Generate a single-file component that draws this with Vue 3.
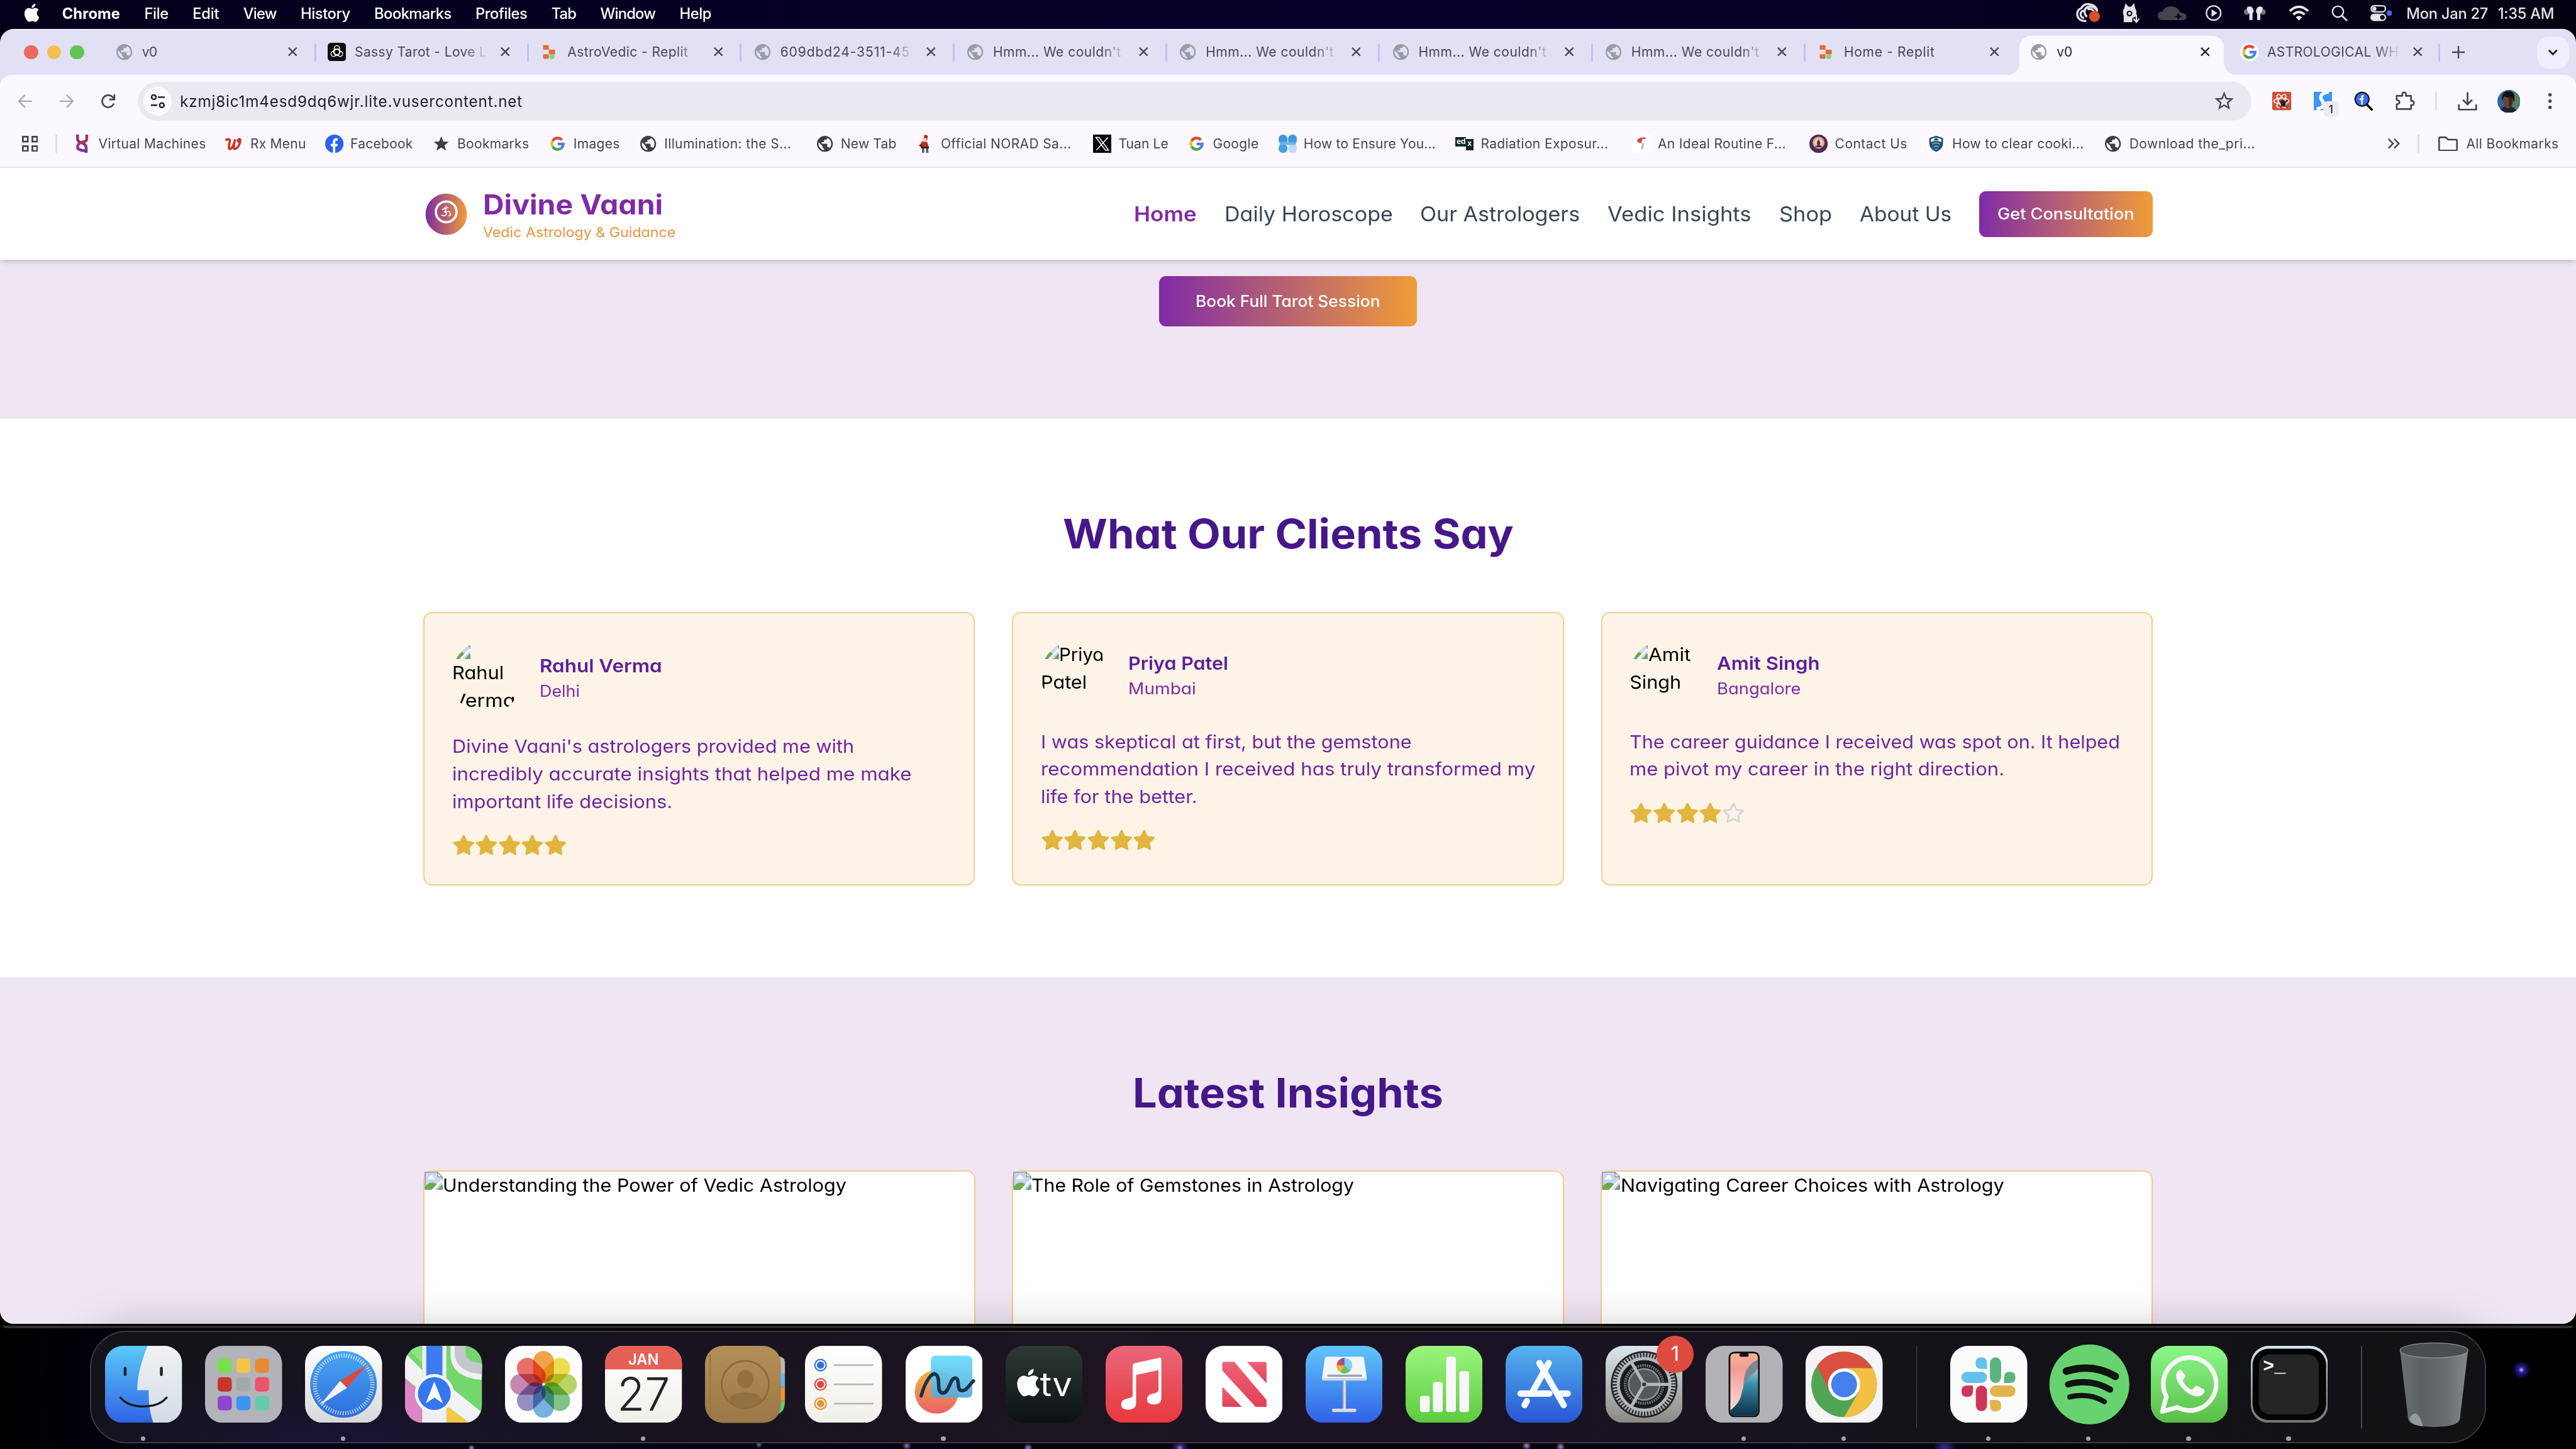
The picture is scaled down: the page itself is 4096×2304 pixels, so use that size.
<script setup>
const DESIGN_WIDTH = 4480

// Sizes a label to the given width: by tracking, or by widening the glyphs with the .wide modifier.
const vFit = {
  mounted(el, { value, modifiers }) {
    const unit = el.closest('.screen').getBoundingClientRect().width / DESIGN_WIDTH
    const natural = el.getBoundingClientRect().width / unit
    if (modifiers.wide) {
      el.style.width = `${value}px`
      el.style.transform = `scaleX(${value / natural})`
    } else {
      el.style.letterSpacing = `${(value - natural) / el.textContent.length}px`
    }
  },
}

const menus = [
  { label: 'Chrome', w: 101, bold: true },
  { label: 'File', w: 42 },
  { label: 'Edit', w: 46 },
  { label: 'View', w: 58 },
  { label: 'History', w: 86 },
  { label: 'Bookmarks', w: 134 },
  { label: 'Profiles', w: 90 },
  { label: 'Tab', w: 43 },
  { label: 'Window', w: 96 },
  { label: 'Help', w: 55 },
]

const tabs = [
  { title: 'v0', icon: 'globe', w: 26 },
  { title: 'Sassy Tarot - Love L', icon: 'gpt', w: 230 },
  { title: 'AstroVedic - Replit', icon: 'replit', w: 210 },
  { title: '609dbd24-3511-45', icon: 'globe', w: 226 },
  { title: "Hmm... We couldn't", icon: 'globe', w: 223 },
  { title: "Hmm... We couldn't", icon: 'globe', w: 223 },
  { title: "Hmm... We couldn't", icon: 'globe', w: 223 },
  { title: "Hmm... We couldn't", icon: 'globe', w: 223 },
  { title: 'Home - Replit', icon: 'replit', w: 158 },
  { title: 'v0', icon: 'globe', w: 27, active: true },
  { title: 'ASTROLOGICAL WH', icon: 'google', w: 229 },
]

const bookmarks = [
  { label: 'Virtual Machines', icon: 'vm', cell: 264, w: 187 },
  { label: 'Rx Menu', icon: 'rx', cell: 174, w: 97 },
  { label: 'Facebook', icon: 'facebook', cell: 186, w: 109 },
  { label: 'Bookmarks', icon: 'solidstar', cell: 202, w: 125 },
  { label: 'Images', icon: 'google', cell: 158, w: 81 },
  { label: 'Illumination: the S...', icon: 'globe', cell: 307, w: 221 },
  { label: 'New Tab', icon: 'globe', cell: 174, w: 97 },
  { label: 'Official NORAD Sa...', icon: 'santa', cell: 309, w: 227 },
  { label: 'Tuan Le', icon: 'x', cell: 164, w: 87 },
  { label: 'Google', icon: 'google', cell: 158, w: 80 },
  { label: 'How to Ensure You...', icon: 'petals', cell: 308, w: 230 },
  { label: 'Radiation Exposur...', icon: 'edx', cell: 308, w: 222 },
  { label: 'An Ideal Routine F...', icon: 'ideal', cell: 308, w: 223 },
  { label: 'Contact Us', icon: 'contact', cell: 204, w: 126 },
  { label: 'How to clear cooki...', icon: 'shield', cell: 308, w: 229 },
  { label: 'Download the_pri...', icon: 'globe', cell: 262, w: 219 },
]

const links = [
  { label: 'Home', w: 109, current: true },
  { label: 'Daily Horoscope', w: 293 },
  { label: 'Our Astrologers', w: 278 },
  { label: 'Vedic Insights', w: 250 },
  { label: 'Shop', w: 92 },
  { label: 'About Us', w: 160 },
]

const clients = [
  {
    name: 'Rahul Verma', nameW: 213, city: 'Delhi', cityW: 70, stars: 5, tall: true,
    alt: [['Rahul', 90], ['Verma', 110]],
    lines: [
      ["Divine Vaani's astrologers provided me with", 699],
      ['incredibly accurate insights that helped me make', 799],
      ['important life decisions.', 383],
    ],
  },
  {
    name: 'Priya Patel', nameW: 174, city: 'Mumbai', cityW: 118, stars: 5,
    alt: [['Priya', 78], ['Patel', 80]],
    lines: [
      ['I was skeptical at first, but the gemstone', 645],
      ['recommendation I received has truly transformed my', 860],
      ['life for the better.', 272],
    ],
  },
  {
    name: 'Amit Singh', nameW: 179, city: 'Bangalore', cityW: 146, stars: 4,
    alt: [['Amit', 74], ['Singh', 90]],
    lines: [
      ['The career guidance I received was spot on. It helped', 853],
      ['me pivot my career in the right direction.', 652],
    ],
  },
]

const insights = [
  { title: 'Understanding the Power of Vedic Astrology', w: 702 },
  { title: 'The Role of Gemstones in Astrology', w: 561 },
  { title: 'Navigating Career Choices with Astrology', w: 667 },
]

const petals = ['#f3982f', '#efdc36', '#b5d251', '#6fbe7a', '#64a9dd', '#8583bd', '#c279ad', '#ea5c55']
const pads = ['#79e04d', '#f3c447', '#e88a35', '#c7362b', '#a3a9ab', '#ec5467', '#8f45cf', '#3c95f2', '#66c9ab']
</script>

<template>
  <div class="screen">
    <svg class="defs" width="0" height="0" aria-hidden="true">
      <defs>
        <linearGradient id="g-om"><stop offset="0" stop-color="#7d2ba3" /><stop offset="1" stop-color="#f09c3b" /></linearGradient>
        <linearGradient id="g-finder" x2="0" y2="1"><stop offset="0" stop-color="#5cc9f8" /><stop offset="1" stop-color="#2f63e6" /></linearGradient>
        <linearGradient id="g-face" x2="0" y2="1"><stop offset="0" stop-color="#f1f1f3" /><stop offset="1" stop-color="#d3dce6" /></linearGradient>
        <linearGradient id="g-white" x2="0" y2="1"><stop offset="0" stop-color="#ffffff" /><stop offset="1" stop-color="#d9d9da" /></linearGradient>
        <linearGradient id="g-paper" x2="0" y2="1"><stop offset="0" stop-color="#ffffff" /><stop offset="1" stop-color="#f0efea" /></linearGradient>
        <linearGradient id="g-safari" x2="0" y2="1"><stop offset="0" stop-color="#4ba7f0" /><stop offset="1" stop-color="#2c6cdf" /></linearGradient>
        <linearGradient id="g-wood" x2="0" y2="1"><stop offset="0" stop-color="#b39058" /><stop offset="1" stop-color="#9c7747" /></linearGradient>
        <linearGradient id="g-sun" x2="0" y2="1"><stop offset="0" stop-color="#f5b63c" /><stop offset="1" stop-color="#ea6069" /></linearGradient>
        <linearGradient id="g-aqua" x2="0" y2="1"><stop offset="0" stop-color="#67dcfa" /><stop offset="1" stop-color="#58a9dc" /></linearGradient>
        <linearGradient id="g-tv" x2="0" y2="1"><stop offset="0" stop-color="#2e3a36" /><stop offset="1" stop-color="#0b1113" /></linearGradient>
        <linearGradient id="g-music" x2="0" y2="1"><stop offset="0" stop-color="#ea667a" /><stop offset="1" stop-color="#e7383d" /></linearGradient>
        <linearGradient id="g-news" x2="0" y2="1"><stop offset="0" stop-color="#ec6377" /><stop offset="1" stop-color="#e33f52" /></linearGradient>
        <linearGradient id="g-keynote" x2="0" y2="1"><stop offset="0" stop-color="#60c6fa" /><stop offset="1" stop-color="#2f60e8" /></linearGradient>
        <linearGradient id="g-numbers" x2="0" y2="1"><stop offset="0" stop-color="#9af57e" /><stop offset="1" stop-color="#5dcb3f" /></linearGradient>
        <linearGradient id="g-store" x2="0" y2="1"><stop offset="0" stop-color="#55b3ef" /><stop offset="1" stop-color="#2756d4" /></linearGradient>
        <linearGradient id="g-prefs" x2="0" y2="1"><stop offset="0" stop-color="#dbe6ec" /><stop offset="1" stop-color="#8b8983" /></linearGradient>
        <linearGradient id="g-phone" x2="0" y2="1"><stop offset="0" stop-color="#f6b48c" /><stop offset=".25" stop-color="#f19c98" /><stop offset="1" stop-color="#fbe3df" /></linearGradient>
        <linearGradient id="g-sea" x2="0" y2="1"><stop offset="0" stop-color="#8ccfda" /><stop offset=".3" stop-color="#3b8ea9" /><stop offset="1" stop-color="#0e3048" /></linearGradient>
        <linearGradient id="g-wa" x2="0" y2="1"><stop offset="0" stop-color="#8cf888" /><stop offset="1" stop-color="#5abd49" /></linearGradient>
        <linearGradient id="g-term" x2="0" y2="1"><stop offset="0" stop-color="#d3e6ee" /><stop offset="1" stop-color="#76726f" /></linearGradient>
        <linearGradient id="g-bin"><stop offset="0" stop-color="#6d7073" /><stop offset=".3" stop-color="#5c6063" /><stop offset=".7" stop-color="#6b6e71" /><stop offset="1" stop-color="#85898b" /></linearGradient>
      </defs>

      <symbol id="globe" viewBox="1.500 1.500 21 21">
        <path fill="currentColor" d="M12 2C6.480 2 2 6.480 2 12s4.480 10 10 10 10-4.480 10-10S17.520 2 12 2zm-1 17.930c-3.950-.49-7-3.850-7-7.930 0-.62.080-1.210.210-1.790L9 15v1c0 1.100.9 2 2 2v1.930zm6.900-2.540c-.26-.81-1-1.390-1.900-1.390h-1v-3c0-.55-.45-1-1-1H8v-2h2c.55 0 1-.45 1-1V7h2c1.100 0 2-.9 2-2v-.41c2.930 1.190 5 4.060 5 7.410 0 2.080-.8 3.970-2.100 5.390z" />
      </symbol>
      <symbol id="google" viewBox="0 0 32 32">
        <circle cx="16" cy="16" r="16" fill="#fff" />
        <g fill="none" stroke-width="4.800">
          <path d="M23.500 9.300A10 10 0 0 0 7.300 11.200" stroke="#dd4b39" />
          <path d="M7.300 11.200a10 10 0 0 0 0 9.600" stroke="#f2b92f" />
          <path d="M7.300 20.800a10 10 0 0 0 15.300 2.600" stroke="#4ca357" />
          <path d="M22.600 23.400A10 10 0 0 0 26 16.300H16.200" stroke="#4c80ee" />
        </g>
      </symbol>
      <symbol id="replit" viewBox="0 0 32 32">
        <path fill="#e36d30" d="M5 4h8a2 2 0 0 1 2 2v6H5zM15 12h9a2 2 0 0 1 2 2v6H15zM5 20h10v6a2 2 0 0 1-2 2H7a2 2 0 0 1-2-2z" />
        <circle cx="20.500" cy="24" r="4.500" fill="#83d48b" />
      </symbol>
      <symbol id="gpt" viewBox="0 0 32 32">
        <rect width="32" height="32" rx="6" fill="#0c0c0c" />
        <g fill="none" stroke="#fff" stroke-width="1.500">
          <rect x="11.500" y="5" width="9" height="17" rx="4.500" /><rect x="11.500" y="5" width="9" height="17" rx="4.500" transform="rotate(120 16 16)" /><rect x="11.500" y="5" width="9" height="17" rx="4.500" transform="rotate(240 16 16)" />
        </g>
      </symbol>
      <symbol id="vm" viewBox="0 0 32 32">
        <path d="M8 0v7q0 5 6 7 9 2 9 9v9" fill="none" stroke="#8a327f" stroke-width="5" />
        <path d="M24 0v8q0 4-8 5-8 2-8 9 0 5 11 6" fill="none" stroke="#a13862" stroke-width="5" />
        <path d="M8 22q0 5 11 6h4v4" fill="none" stroke="#7431a4" stroke-width="4" />
      </symbol>
      <symbol id="rx" viewBox="0 0 32 32">
        <path d="M2 9q7-3 6 3-3 13 0 13 5 0 9-15-4 15 0 15 6-1 9-12 1-6-2-5-4 2 0 5" fill="none" stroke="#cf3426" stroke-width="4" stroke-linecap="round" stroke-linejoin="round" />
      </symbol>
      <symbol id="facebook" viewBox="0 0 32 32">
        <circle cx="16" cy="16" r="16" fill="#2b62f0" />
        <path fill="#fff" d="M13.500 32V20.500H9.800V16h3.700v-3.400c0-4.100 2.200-6.200 6-6.200 1.200 0 2.400.2 2.400.2v4h-2c-1.900 0-2.300 1-2.300 2.200V16h4.200l-.8 4.500h-3.400V32z" />
      </symbol>
      <symbol id="solidstar" viewBox="0 0 32 32">
        <path fill="#3e4044" d="M16 3l3.700 8.900 9.300.6-7.200 6 2.400 9.300-8.200-5.200-8.200 5.200 2.400-9.300-7.200-6 9.300-.6z" />
      </symbol>
      <symbol id="santa" viewBox="0 0 32 32">
        <path d="M15 0l6 2-1 8h-6z" fill="#b0231c" /><path d="M12 6h7v7h-7z" fill="#e6cdb8" />
        <path d="M10 12l10 1 3 9-11 2-4-3z" fill="#c42a20" /><path d="M9 21h14v3H9z" fill="#2b1b1a" />
        <path d="M11 24h4v8h-4zM18 24h4v8h-4z" fill="#50605a" /><path d="M5 19l5-3v5z" fill="#222" />
      </symbol>
      <symbol id="x" viewBox="0 0 32 32">
        <rect width="32" height="32" fill="#050505" />
        <path d="M5 5h5.500L27 27h-5.500zM26 5L6 27" fill="none" stroke="#fff" stroke-width="1.700" />
      </symbol>
      <symbol id="petals" viewBox="0 0 32 32">
        <rect width="15.500" height="17" rx="7.500" fill="#4597dc" /><rect x="16.500" width="15.500" height="17" rx="7.500" fill="#4597dc" />
        <rect y="16" width="15.500" height="16" rx="7.500" fill="#4c9fe2" /><rect x="16.500" y="16" width="15.500" height="16" rx="7.500" fill="#bcdcf5" />
        <rect x="2" y="13" width="28" height="5" fill="#6fb2e8" />
      </symbol>
      <symbol id="ideal" viewBox="0 0 32 32">
        <rect width="32" height="32" fill="#fff" />
        <path d="M8 9q4-5 14-4l2 2-7 1-2 7-7-2z" fill="#c0523f" /><path d="M16 13l4 3-2 10-3-1z" fill="#c5bcb8" />
      </symbol>
      <symbol id="contact" viewBox="0 0 32 32">
        <circle cx="16" cy="16" r="16" fill="#4d2a56" /><circle cx="16" cy="14" r="10.500" fill="#d9a093" /><circle cx="16" cy="14" r="7.500" fill="#f0cda8" />
        <path d="M16 8l3 6-1 4 5 4H9l5-4-1-4z" fill="#4d2a56" />
      </symbol>
      <symbol id="shield" viewBox="0 0 32 32">
        <rect width="32" height="32" rx="4" fill="#fff" />
        <path d="M16 2l12 4v9q0 10-12 15Q4 25 4 15V6z" fill="#294a79" />
        <path d="M7 8l9-3 9 3v5q-9-4-18 0z" fill="#fff" /><path d="M16 5l5 5H11z" fill="#294a79" />
        <path d="M9 17q7-5 14 0M11 22q5-4 10 0M14 26q2-2 4 0" fill="none" stroke="#5cb8a4" stroke-width="2" />
      </symbol>
      <symbol id="cross" viewBox="0 0 16 16">
        <path d="M1 1l14 14M15 1L1 15" stroke="currentColor" stroke-width="2.600" fill="none" />
      </symbol>
      <symbol id="broken" viewBox="0 0 32 32">
        <path d="M1 1h22l8 8v22H1z" fill="#c6d7f4" />
        <path d="M5 13q0-3 3-3 1-4 4-4t4 4q2 0 2 3z" fill="#fff" />
        <path d="M1 31v-5q7-7 12-7 6 0 10 6l-5 6z" fill="#6dab48" />
        <path d="M31 12v5L17 32h-5z" fill="#fff" /><path d="M31 21v10h-8z" fill="#6dab48" />
        <path d="M23 1v8h8z" fill="#fff" />
        <path d="M1 31V1h22l8 8v5M23 1v8h8M1 31h12M22 31h9v-8" fill="none" stroke="#8c8f94" stroke-width="1.500" />
      </symbol>
      <symbol id="star" viewBox="0 0 24 24">
        <path stroke="currentColor" stroke-width="2" stroke-linejoin="round" d="M12 2l3.090 6.260L22 9.270l-5 4.870 1.180 6.880L12 17.770l-6.180 3.250L7 14.140 2 9.270l6.910-1.010z" />
      </symbol>
      <symbol id="apple" viewBox="0 0 26 32">
        <path fill="currentColor" d="M21.600 17c0-3.200 2.600-4.700 2.700-4.800-1.500-2.200-3.800-2.500-4.600-2.500-2-.2-3.800 1.200-4.800 1.200s-2.500-1.100-4.100-1.100c-2.100 0-4.100 1.200-5.200 3.100-2.200 3.900-.6 9.600 1.600 12.700 1.100 1.500 2.300 3.300 4 3.200 1.600-.1 2.200-1 4.100-1s2.500 1 4.200 1 2.800-1.500 3.900-3.100c1.200-1.800 1.700-3.500 1.700-3.600 0 0-3.400-1.300-3.500-5.100zM18.400 7.700c.9-1.100 1.500-2.600 1.300-4.100-1.300.1-2.800.9-3.800 1.900-.8 1-1.600 2.500-1.400 4 1.500.1 3-.7 3.900-1.800z" />
      </symbol>
    </svg>

    <header class="menubar">
      <svg class="apple" viewBox="3 3 22 27"><use href="#apple" width="26" height="32" /></svg>
      <nav class="menus">
        <span v-for="m in menus" :key="m.label" v-fit="m.w" class="t" :class="{ bold: m.bold }">{{ m.label }}</span>
      </nav>
      <div class="status">
        <svg width="42" height="34" viewBox="0 0 42 34">
          <path d="M18 31Q4 32 2 20 2 11 9 9 14 0 24 2q12 2 13 12-4-8-12-8-9 0-10 8-1 5 4 10M14 26q-6-1-6-7 0-5 6-6M20 11q8-3 12 5" fill="none" stroke="#e4e3e8" stroke-width="3.600" />
          <circle cx="32" cy="23" r="9.500" fill="#dd4d27" />
        </svg>
        <svg width="30" height="34" viewBox="0 0 30 34">
          <path d="M2 33V22Q-1 14 3 9L5 0l5 6h5l5-6 2 9q4 6 1 12v2l-6 3v7z" fill="#e4e3e8" />
          <circle cx="12" cy="18" r="5" fill="#05011a" /><circle cx="12" cy="18" r="2.600" fill="#e4e3e8" />
          <path d="M24 20v12M19 27l5 6 5-6" stroke="#e4e3e8" stroke-width="2.500" fill="none" />
        </svg>
        <svg width="50" height="24" viewBox="0 0 50 24">
          <path d="M9 24Q0 23 0 16q1-7 8-7 5-9 16-9 12 1 15 11 11 1 11 7 0 6-7 6z" fill="#45434f" />
          <path d="M36 11q1 6 7 7-6 1-7 6-1-5-7-6 6-1 7-7z" fill="#0b0718" />
        </svg>
        <svg width="30" height="30" viewBox="0 0 30 30">
          <circle cx="15" cy="15" r="12.500" fill="none" stroke="#e4e3e8" stroke-width="2.500" /><path d="M11.500 8.500v13l10-6.500z" fill="#e4e3e8" />
        </svg>
        <svg width="40" height="28" viewBox="0 0 40 28">
          <circle cx="6" cy="12" r="5" fill="#77757f" /><circle cx="34" cy="12" r="5" fill="#77757f" />
          <path d="M6 5Q9 1 14 3q4 3 4 9l-2 3v11h-5.500V15q-4-3-4.500-10zM34 5q-3-4-8-2-4 3-4 9l2 3v11h5.500V15q4-3 4.500-10z" fill="#e4e3e8" />
        </svg>
        <svg width="36" height="26" viewBox="0 0 36 26">
          <path d="M2 9.500q16-15 32 0M8 15.500q10-9 20 0" fill="none" stroke="#e4e3e8" stroke-width="4.200" /><path d="M12.500 20q5.500-4.500 11 0L18 26z" fill="#e4e3e8" />
        </svg>
        <svg width="28" height="28" viewBox="0 0 28 28">
          <circle cx="11.500" cy="11.500" r="9.500" fill="none" stroke="#e4e3e8" stroke-width="2.600" /><path d="M18.500 18.500l8 8" stroke="#e4e3e8" stroke-width="3" stroke-linecap="round" />
        </svg>
        <svg width="38" height="28" viewBox="0 0 38 28">
          <rect x="1.300" y="1.300" width="25" height="10.500" rx="5.200" fill="none" stroke="#e4e3e8" stroke-width="2.500" /><circle cx="7" cy="6.500" r="3.600" fill="#e4e3e8" />
          <rect y="15" width="27.500" height="13" rx="6.500" fill="#e4e3e8" /><circle cx="21" cy="21.500" r="4" fill="#0a0618" />
          <circle cx="33" cy="14" r="5" fill="#5b5ce0" />
        </svg>
        <div class="clock"><span v-fit="142" class="t">Mon Jan 27</span><span v-fit="98" class="t">1:35 AM</span></div>
      </div>
    </header>

    <main class="window">
      <div class="tabstrip">
        <div class="lights"><i class="red" /><i class="amber" /><i class="green" /></div>
        <div class="tabs">
          <div v-for="(tab, i) in tabs" :key="i" class="tab" :class="{ active: tab.active, last: i === tabs.length - 1, quiet: i === 8 }">
            <svg class="favicon" :class="tab.icon"><use :href="`#${tab.icon}`" /></svg>
            <div class="title"><span v-fit="tab.w" class="t">{{ tab.title }}</span></div>
            <svg class="close" width="16" height="16"><use href="#cross" /></svg>
            <i v-if="!tab.active" class="sep" />
          </div>
        </div>
        <svg class="plus" width="22" height="22" viewBox="0 0 22 22"><path d="M11 0v22M0 11h22" stroke="#48445a" stroke-width="2.600" /></svg>
        <div class="chevron"><svg width="18" height="12" viewBox="0 0 18 12"><path d="M2 2l7 7 7-7" fill="none" stroke="#201d2c" stroke-width="3" /></svg></div>
      </div>

      <div class="toolbar">
        <div class="history">
          <svg width="26" height="26" viewBox="0 0 26 26"><path d="M25 13H2M13 2L2 13l11 11" fill="none" stroke="#aaa7b2" stroke-width="2.600" /></svg>
          <svg width="26" height="26" viewBox="0 0 26 26"><path d="M1 13h23M13 2l11 11-11 11" fill="none" stroke="#aaa7b2" stroke-width="2.600" /></svg>
          <svg width="26" height="26" viewBox="0 0 26 26"><path d="M23 17a10.500 10.500 0 1 1-2.300-11.300L24 9M24 1v9h-9" fill="none" stroke="#474356" stroke-width="2.800" /></svg>
        </div>
        <div class="omnibox">
          <div class="site">
            <svg width="26" height="26" viewBox="0 0 26 26"><g fill="none" stroke="#26232f" stroke-width="2.800"><circle cx="6" cy="6" r="3.800" /><path d="M13 6h12M1 20h11" /><circle cx="20" cy="20" r="3.800" /></g></svg>
          </div>
          <span v-fit="596" class="t url">kzmj8ic1m4esd9dq6wjr.lite.vusercontent.net</span>
          <svg class="fav" width="34" height="34" viewBox="0 0 34 34"><path d="M17 4l3.700 8.900 9.600.8-7.300 6.300 2.200 9.400-8.200-5-8.200 5 2.200-9.400-7.300-6.300 9.600-.8z" fill="none" stroke="#474356" stroke-width="2.600" /></svg>
        </div>
        <div class="extensions">
          <svg width="34" height="32" viewBox="0 0 34 32">
            <rect width="33" height="32" rx="3" fill="#cf4f39" />
            <g fill="none" stroke="#fff" stroke-width="1.700"><ellipse cx="16" cy="16" rx="13" ry="5" /><ellipse cx="16" cy="16" rx="13" ry="5" transform="rotate(60 16 16)" /><ellipse cx="16" cy="16" rx="13" ry="5" transform="rotate(120 16 16)" /></g>
            <ellipse cx="19" cy="20" rx="4.500" ry="6" fill="#252223" /><path d="M12 15l14 12M27 14L13 27" stroke="#252223" stroke-width="1.600" />
          </svg>
          <div class="ext-s">
            <svg width="32" height="32" viewBox="0 0 32 32"><rect width="32" height="32" fill="#3f96f2" /><path d="M26 0Q9 3 13 13q4 5 4 9-1 6-12 8" fill="none" stroke="#fff" stroke-width="6" /></svg>
            <span class="count">1</span>
          </div>
          <svg width="34" height="34" viewBox="0 0 34 34">
            <circle cx="14" cy="14" r="12" fill="#3a6df0" stroke="#151518" stroke-width="2.400" /><path d="M22 23l9 9" stroke="#0c0c0e" stroke-width="4" stroke-linecap="round" />
            <path d="M12.500 23v-8h-3v-3h3V9.500Q13 6 17 6.500v3q-2 0-2 1.500v1h2l-.5 3H15v8z" fill="#fff" />
          </svg>
          <svg width="34" height="34" viewBox="0 0 34 34"><path d="M2 8h10q-1-6 3-6t3 6h9v9q5-1 5 3.500T27 24v7H2v-8q5-1 5-4t-5-4z" fill="none" stroke="#474356" stroke-width="2.900" stroke-linejoin="round" /></svg>
          <i class="rule" />
          <svg width="34" height="34" viewBox="0 0 34 34"><path d="M17 2v20M9 15l8 8 8-8M2 23v9h30v-9" fill="none" stroke="#474356" stroke-width="3" /></svg>
          <svg width="40" height="40" viewBox="0 0 40 40">
            <clipPath id="me"><circle cx="20" cy="20" r="20" /></clipPath>
            <g clip-path="url(#me)"><rect width="40" height="40" fill="#35619f" /><rect x="24" width="16" height="40" fill="#52806b" /><path d="M3 40q3-12 15-12t18 12z" fill="#1c2635" /><ellipse cx="19" cy="19" rx="8.500" ry="13" fill="#6a4335" /><path d="M19 8q8 1 7 12-1 9-5 12z" fill="#3b251f" /><path d="M8 20Q6 2 20 2q13 0 9 20l-3-9q-8 2-14-2z" fill="#15110f" /></g>
          </svg>
          <svg width="8" height="30" viewBox="0 0 8 30"><g fill="#474356"><circle cx="4" cy="4" r="3" /><circle cx="4" cy="15" r="3" /><circle cx="4" cy="26" r="3" /></g></svg>
        </div>
      </div>

      <div class="bookmarks">
        <svg class="grid" width="28" height="28" viewBox="0 0 28 28"><g fill="none" stroke="#474356" stroke-width="3"><rect x="1.500" y="1.500" width="8.500" height="8.500" /><rect x="18" y="1.500" width="8.500" height="8.500" /><rect x="1.500" y="18" width="8.500" height="8.500" /><rect x="18" y="18" width="8.500" height="8.500" /></g></svg>
        <i class="rule" />
        <div class="marks">
          <div v-for="b in bookmarks" :key="b.label" class="mark" :style="{ width: b.cell + 'px' }">
            <div v-if="b.icon === 'edx'" class="edx"><b>ed</b><b>x</b></div>
            <svg v-else class="favicon" :class="b.icon"><use :href="`#${b.icon}`" /></svg><span v-fit="b.w" class="t">{{ b.label }}</span>
          </div>
        </div>
        <svg class="more" width="22" height="18" viewBox="0 0 22 18"><path d="M2 1l8 8-8 8M12 1l8 8-8 8" fill="none" stroke="#474356" stroke-width="2.800" /></svg>
        <i class="rule" />
        <svg width="34" height="26" viewBox="0 0 34 26"><path d="M3 1.500h10l4 4h14q1.500 0 1.500 1.500v16q0 1.500-1.500 1.500H3q-1.500 0-1.500-1.500V3Q1.500 1.500 3 1.500z" fill="none" stroke="#474356" stroke-width="2.800" /></svg>
        <span v-fit="161" class="t all">All Bookmarks</span>
      </div>

      <div class="page">
        <div class="site-header">
          <div class="brand">
            <svg width="80" height="80" viewBox="0 0 80 80">
              <circle cx="40" cy="40" r="36" fill="url(#g-om)" />
              <circle cx="40" cy="36" r="18" fill="none" stroke="#fff" stroke-width="4" />
              <path d="M33 32q4-3 6 0t-3 4q5 0 4 4.500-2 3.500-8 1M39 37q3-2 5-2t3 4-3 4M37 28.500q3 2 6 0" fill="none" stroke="#fff" stroke-width="1.700" stroke-linecap="round" /><circle cx="40" cy="26.500" r="1.200" fill="#fff" />
            </svg>
            <div class="brand-text">
              <span v-fit.wide="313" class="t name">Divine Vaani</span>
              <span v-fit.wide="335" class="t tag">Vedic Astrology &amp; Guidance</span>
            </div>
          </div>
          <nav class="links">
            <span v-for="l in links" :key="l.label" v-fit.wide="l.w" class="t" :class="{ current: l.current }">{{ l.label }}</span>
            <button class="cta small"><span v-fit.wide="238" class="t">Get Consultation</span></button>
          </nav>
        </div>

        <section class="tarot"><button class="cta"><span v-fit.wide="321" class="t">Book Full Tarot Session</span></button></section>

        <section class="clients">
          <h2><span v-fit.wide="784" class="t">What Our Clients Say</span></h2>
          <div class="cards">
            <article v-for="c in clients" :key="c.name" class="card quote">
              <div class="who">
                <div class="avatar" :class="{ tall: c.tall }">
                  <svg width="32" height="32"><use href="#broken" /></svg><span v-for="a in c.alt" :key="a[0]" class="alt-line"><span v-fit.wide="a[1]" class="t">{{ a[0] }}</span></span>
                </div>
                <div class="person">
                  <div class="pname"><span v-fit.wide="c.nameW" class="t">{{ c.name }}</span></div>
                  <div class="city"><span v-fit.wide="c.cityW" class="t">{{ c.city }}</span></div>
                </div>
              </div>
              <p><span v-for="l in c.lines" :key="l[0]" class="line"><span v-fit.wide="l[1]" class="t">{{ l[0] }}</span></span></p>
              <div class="stars">
                <svg v-for="n in 5" :key="n" width="40" height="40" :class="{ off: n > c.stars }"><use href="#star" /></svg>
              </div>
            </article>
          </div>
        </section>

        <section class="insights">
          <h2><span v-fit.wide="540" class="t">Latest Insights</span></h2>
          <div class="cards">
            <article v-for="a in insights" :key="a.title" class="card post">
              <svg width="32" height="32"><use href="#broken" /></svg><span v-fit.wide="a.w" class="t">{{ a.title }}</span>
            </article>
          </div>
        </section>
      </div>
    </main>

    <footer class="desk">
      <div class="ledge" />
      <div class="dock">
        <div class="app on"><svg viewBox="0 0 134 134">
          <clipPath id="sq"><rect width="134" height="134" rx="31" /></clipPath>
          <g clip-path="url(#sq)"><rect width="134" height="134" fill="url(#g-finder)" /><path d="M74 0Q56 44 56 77h20q-1 32 8 57h50V0z" fill="url(#g-face)" /></g>
          <path d="M35 39v11M98 39v11" stroke="#1d2530" stroke-width="5" stroke-linecap="round" /><path d="M27 90q12 15 39 15.500Q95 105 107 90" fill="none" stroke="#14161b" stroke-width="3.600" stroke-linecap="round" />
        </svg></div>

        <div class="app"><svg viewBox="0 0 134 134"><rect width="134" height="134" rx="31" fill="#b3b3ba" />
          <rect v-for="(p, i) in pads" :key="p" :x="22 + (i % 3) * 32.500" :y="22 + Math.floor(i / 3) * 32.500" width="24.500" height="25" rx="6" :fill="p" />
        </svg></div>

        <div class="app on"><svg viewBox="0 0 134 134"><rect width="134" height="134" rx="31" fill="url(#g-white)" />
          <circle cx="67" cy="67" r="58" fill="url(#g-safari)" /><circle cx="67" cy="67" r="50" fill="none" stroke="#e8f2fc" stroke-width="7" stroke-dasharray="1.300 3.063" />
          <path d="M109 32L61 61l12 12z" fill="#dd4a3d" /><path d="M26 103l35-42 12 12z" fill="#f5f5f7" />
        </svg></div>

        <div class="app"><svg viewBox="0 0 134 134"><g clip-path="url(#sq)">
          <rect width="134" height="134" fill="#74d76d" /><path d="M0 0h60v60z" fill="#8be680" />
          <path d="M0 56l30 28v50H0z" fill="#dd86c4" /><path d="M0 12l30 30v38L0 56zM72 66l62 50v18h-22L72 104z" fill="#f2f2f5" /><path d="M72 104l40 30H72z" fill="#f4c944" />
          <path d="M92 0v14q0 30 42 32" fill="none" stroke="#f0f0f3" stroke-width="26" /><path d="M96 0v12q0 24 38 28" fill="none" stroke="#c3c5cf" stroke-width="19" />
          <rect x="30" width="42" height="134" fill="#edeef2" /><rect x="37" width="28" height="70" fill="#3c7cf0" />
        </g><circle cx="51" cy="83" r="34" fill="#f3f3f6" /><circle cx="51" cy="83" r="28.500" fill="#3577f0" /><path d="M51 62l15 38-15-10-15 10z" fill="#fff" /></svg></div>

        <div class="app"><svg viewBox="0 0 134 134"><rect width="134" height="134" rx="31" fill="#fcfcfd" />
          <g class="petals-big"><rect v-for="(p, i) in petals" :key="p" x="49" y="9" width="36" height="56" rx="18" :fill="p" fill-opacity=".88" :transform="`rotate(${i * 45} 67 67)`" /></g>
        </svg></div>

        <div class="app on"><svg viewBox="0 0 134 134"><g clip-path="url(#sq)"><rect width="134" height="134" fill="url(#g-paper)" /><rect width="134" height="41" fill="#e46055" /></g>
          <text x="67" y="32.500" text-anchor="middle" font-size="26" font-weight="600" fill="#fff" textLength="53">JAN</text>
          <text x="67" y="113" text-anchor="middle" font-size="80" font-weight="300" fill="#222224" textLength="92" lengthAdjust="spacingAndGlyphs">27</text>
        </svg></div>

        <div class="app"><svg viewBox="0 0 134 134" overflow="visible"><path d="M128 18q11 2 11 10v20h-11z" fill="#b9b8b6" /><path d="M128 48h11v24h-11z" fill="#64b4ee" /><path d="M128 72h11v24h-11z" fill="#ee9337" /><path d="M128 96h11q0 18-11 22z" fill="#5ccb6b" />
          <rect width="132" height="134" rx="31" fill="url(#g-wood)" /><path d="M9 14v106" stroke="#94713f" stroke-width="2" />
          <circle cx="70" cy="67" r="41" fill="none" stroke="#8c6a3c" stroke-width="3" /><ellipse cx="70" cy="58" rx="14" ry="16" fill="#93703f" /><path d="M41 95q5-14 29-14t29 14q-12 13-29 13T41 95z" fill="#93703f" />
        </svg></div>

        <div class="app"><svg viewBox="0 0 134 134"><rect width="134" height="134" rx="31" fill="url(#g-paper)" />
          <g v-for="(c, i) in ['#2f72ec', '#e0473b', '#e8922f']" :key="c"><circle cx="27" :cy="33.500 + i * 33.500" r="9.800" fill="none" :stroke="c" stroke-width="2.300" /><circle cx="27" :cy="33.500 + i * 33.500" r="6.300" :fill="c" /><rect x="50" :y="32 + i * 33.500" width="69" height="3" fill="#b9b8bc" /></g>
        </svg></div>

        <div class="app on"><svg viewBox="0 0 134 134"><rect width="134" height="134" rx="31" fill="#fff" />
          <circle cx="54" cy="80" r="38" fill="url(#g-sun)" /><rect x="44" y="17" width="72" height="73" rx="8" fill="url(#g-aqua)" fill-opacity=".93" />
          <path d="M27 87C34 62 46 44 53 50c9 7-1 32 12 32 11 0 12-26 21-26 10 0 1 22 12 22 9 0 12-10 20-17" fill="none" stroke="#17324e" stroke-width="6" stroke-linecap="round" />
        </svg></div>

        <div class="app"><svg viewBox="0 0 134 134"><rect width="134" height="134" rx="31" fill="url(#g-tv)" />
          <svg x="17" y="39" width="42" height="51" viewBox="3 3 22 27" color="#fff"><use href="#apple" width="26" height="32" /></svg>
          <text x="60" y="88" font-size="57" font-weight="400" fill="#fff" textLength="56" lengthAdjust="spacingAndGlyphs">tv</text>
        </svg></div>

        <div class="app"><svg viewBox="0 0 134 134"><rect width="134" height="134" rx="31" fill="url(#g-music)" />
          <path d="M47 34q0-3 3-3.700l43-9.600q4-1 4 3V90q0 12-13 12-12 0-12-9 0-8 10-10 10-2 10-6V42L53 50.500V99q0 12-14 12-12 0-12-9 0-8 10-10 10-2 10-6z" fill="#fff" />
        </svg></div>

        <div class="app"><svg viewBox="0 0 134 134"><rect width="134" height="134" rx="31" fill="#fff" />
          <g fill="url(#g-news)"><path d="M32 28h18l56 66v12H87L29 43V31q0-3 3-3z" /><path d="M72 28h31q3 0 3 3v34z" /><path d="M29 71l34 35H32q-3 0-3-3z" /></g>
        </svg></div>

        <div class="app"><svg viewBox="0 0 134 134"><rect width="134" height="134" rx="31" fill="url(#g-keynote)" />
          <rect x="64.500" y="58" width="6" height="54" fill="#b6b6ba" /><rect x="67" y="58" width="2" height="54" fill="#efe9e4" /><rect x="46" y="109" width="42" height="6" rx="2" fill="#d8dade" />
          <path d="M36 19h62q3 0 3.500 3l5 34q0 4-3 4h-72q-3 0-3-4l5-34q.5-3 2.500-3z" fill="#f4f5f8" /><path d="M38 50h60v4H38z" fill="#98a4b4" /><path d="M29 56h77v1.500q0 3-3 3H32q-3 0-3-3z" fill="#c9d6ea" />
          <circle cx="67.500" cy="34.500" r="13.500" fill="#7fd0fb" /><path d="M67.500 34.500v-13.500a13.500 13.500 0 0 0-9 3.600z" fill="#8a4fa0" /><path d="M67.500 34.500l-9-10a13.500 13.500 0 0 0-4.500 9z" fill="#dc4a4a" /><path d="M67.500 34.500L54 33.500a13.500 13.500 0 0 0 7 12.500z" fill="#f1b040" /><path d="M67.500 34.500L61 46a13.500 13.500 0 0 0 17-3z" fill="#6fbf56" />
        </svg></div>

        <div class="app"><svg viewBox="0 0 134 134"><rect width="134" height="134" rx="31" fill="url(#g-numbers)" />
          <g fill="#f7f7f9"><rect x="25" y="87" width="17" height="28" rx="4" /><rect x="47.500" y="63" width="17" height="52" rx="4" /><rect x="70.500" y="19" width="17" height="96" rx="4" /><rect x="93.500" y="44" width="17" height="71" rx="4" /></g>
        </svg></div>

        <div class="app"><svg viewBox="0 0 134 134"><rect width="134" height="134" rx="31" fill="url(#g-store)" />
          <g stroke="#f6f9fd" stroke-width="11" stroke-linecap="round"><path d="M75 30L48 78" /><path d="M59 30l42 73" /><path d="M26 83h50" /><path d="M95 83h13" /><path d="M37 96l-4 7" /></g>
        </svg></div>

        <div class="app"><svg viewBox="0 0 134 134"><rect width="134" height="134" rx="31" fill="url(#g-prefs)" />
          <circle cx="67" cy="67" r="58" fill="#232427" /><circle cx="67" cy="67" r="51" fill="none" stroke="#a9adb0" stroke-width="8" stroke-dasharray="3 2.340" /><circle cx="67" cy="67" r="45" fill="none" stroke="#b4b8ba" stroke-width="5" />
          <circle cx="67" cy="67" r="40" fill="#17181a" /><circle cx="67" cy="67" r="33" fill="none" stroke="#6e7174" stroke-width="5" stroke-dasharray="2.500 1.500" /><circle cx="67" cy="67" r="27" fill="#55585b" stroke="#8b8f92" stroke-width="3" />
          <path d="M67 67h44M67 67L45 29M67 67l-22 38" stroke="#b4b8ba" stroke-width="5.500" /><circle cx="67" cy="67" r="4.500" fill="#34363a" stroke="#b4b8ba" stroke-width="2" />
        </svg><span class="badge">1</span></div>

        <div class="app on"><svg viewBox="0 0 134 134"><rect width="134" height="134" rx="31" fill="#b1b1b7" />
          <rect x="40" y="10" width="54" height="114" rx="10" fill="#0c0d10" /><rect x="43" y="13" width="48" height="108" rx="7" fill="url(#g-phone)" />
          <path d="M91 24Q67 34 66 66l-1 6q20-20 26-36z" fill="#7d8797" /><path d="M91 42Q66 58 62 86q-3 14-19 26v3q0 6 7 6h34q7 0 7-7z" fill="url(#g-sea)" /><rect x="59" y="13" width="16" height="6" rx="3" fill="#0c0d10" />
        </svg></div>

        <div class="app on"><svg viewBox="0 0 134 134"><rect width="134" height="134" rx="31" fill="#f4f4f4" />
          <circle cx="67" cy="67" r="57" fill="#52a455" /><path d="M67 38.500h49.400A57 57 0 0 1 67 124l25-43z" fill="#f3bf42" />
          <path d="M20 34.500Q38 10 67 10t49.400 28.500H67l-25 43z" fill="#d95040" /><circle cx="67" cy="67" r="28" fill="#fff" /><circle cx="67" cy="67" r="22.500" fill="#4680ea" />
        </svg></div>

        <i class="split" />

        <div class="app on"><svg viewBox="0 0 134 134"><rect width="134" height="134" rx="31" fill="#fbfbfb" />
          <path d="M54 20q10 0 10 10v10H54q-10 0-10-10t10-10z" fill="#65c1ea" /><rect x="19.500" y="45" width="44.500" height="19.500" rx="9.700" fill="#65c1ea" />
          <rect x="69" y="20" width="19.500" height="44.500" rx="9.700" fill="#5bb381" /><path d="M93.500 64.500V55q0-10 10-10t10 10-10 9.500z" fill="#5bb381" />
          <path d="M39.500 69v10q0 10-10 10t-10-10 10-10z" fill="#ce375c" /><rect x="44.500" y="69" width="19.500" height="44.500" rx="9.700" fill="#ce375c" />
          <rect x="69" y="69" width="44.500" height="19.500" rx="9.700" fill="#e2b44b" /><path d="M69 94h9.700q10 0 10 10t-10 10-9.700-10z" fill="#e2b44b" />
        </svg></div>

        <div class="app on"><svg viewBox="0 0 134 134" overflow="visible"><circle cx="67" cy="67" r="69.500" fill="#67d370" />
          <g fill="none" stroke="#101310" stroke-linecap="round"><path d="M27 44q46-14 85 9" stroke-width="13" /><path d="M30 67q39-11 73 9" stroke-width="11" /><path d="M33 89q33-8 60 8" stroke-width="9" /></g>
        </svg></div>

        <div class="app on"><svg viewBox="0 0 134 134"><rect width="134" height="134" rx="31" fill="url(#g-wa)" />
          <path d="M20 114l7-26A46 46 0 1 1 46 107z" fill="none" stroke="#f6f7f6" stroke-width="8" stroke-linejoin="round" />
          <path d="M53 42c-2-1-5 0-7 3-4 6-2 14 5 24 8 11 18 18 29 19 6 0 12-3 13-8 1-4 0-5-3-6l-9-4c-2-1-3-1-5 1l-4 5c-2 1-11-5-16-14-1-2 0-3 1-4 3-4 4-4 3-6z" fill="#f6f7f6" />
        </svg></div>

        <div class="app on"><svg viewBox="0 0 134 134"><rect width="134" height="134" rx="31" fill="url(#g-term)" /><rect x="3" y="5" width="128" height="124" rx="28" fill="#050505" /><rect x="14" y="15" width="104" height="104" rx="19" fill="#242526" />
          <text x="21" y="45" font-size="33" font-weight="700" fill="#fff" font-family="Liberation Mono, monospace">&gt;_</text>
        </svg></div>

        <i class="split" />

        <div class="app"><svg viewBox="0 0 134 134" overflow="visible">
          <path d="M8 9l14 118q2 14 45 14t45-14L126 9z" fill="url(#g-bin)" /><ellipse cx="67" cy="8" rx="59" ry="13" fill="#4b4e51" stroke="#8d9093" stroke-width="1.500" />
          <path d="M24 126q14-22 24 14-22-2-24-14z" fill="#b9bdbf" fill-opacity=".6" />
        </svg></div>
      </div>
    </footer>
  </div>
</template>

<style>
body { margin: 0; overflow: hidden; background: #000; }
</style>

<style scoped>
.screen {
  zoom: 0.9142857;
  width: 4480px;
  height: 2520px;
  overflow: hidden;
  background: #000;
  font-family: Inter, "Liberation Sans", sans-serif;
  display: flex;
  flex-direction: column;
}
.screen * { box-sizing: border-box; }
.defs { position: absolute; }
svg { display: block; flex: none; }
.t { display: inline-block; white-space: nowrap; flex: none; text-align: left; transform-origin: 0 50%; }

.menubar {
  height: 50px;
  padding: 0 38px 4px 40px;
  display: flex;
  align-items: center;
  background: linear-gradient(90deg, #04001b, #05002a 55%, #060022 75%, #040010);
  color: #fff;
  font-size: 26px;
  font-weight: 500;
}
.apple { width: 28px; height: 34px; margin-right: 40px; }
.menus { display: flex; gap: 42px; }
.bold { font-weight: 700; }
.status { margin-left: auto; display: flex; align-items: center; color: #e4e3e8; }
.status > svg + svg { margin-left: 39px; }
.status > svg:nth-child(3) { margin-left: 32px; }
.status > svg:nth-child(4) { margin-left: 32px; }
.status > svg:nth-child(5) { margin-left: 36px; }
.clock { margin-left: 25px; display: flex; gap: 17px; }

.window {
  height: 2252px;
  border-radius: 24px;
  overflow: hidden;
  background: #e2e0f5;
  display: flex;
  flex-direction: column;
}
.tabstrip {
  height: 80px;
  display: flex;
  align-items: center;
  border-top: 2.200px solid #efedfa;
  font-size: 23px;
  color: #48445a;
}
.lights { width: 178px; padding-left: 42px; display: flex; gap: 15.500px; }
.lights i { width: 24.500px; height: 24.500px; border-radius: 50%; }
.red { background: #ec6a5e; }
.amber { background: #f4bf4f; }
.green { background: #61c554; }
.tabs { display: flex; height: 100%; align-self: stretch; }
.tab { position: relative; width: 370px; display: flex; align-items: center; padding: 0 0 2px 22px; }
.favicon { width: 32px; height: 32px; }
.favicon.globe { padding: 1.500px; color: #3c3f43; }
.tab .favicon.globe { color: #989da1; }
.title {
  width: 232px;
  margin-left: 15px;
  overflow: hidden;
  -webkit-mask-image: linear-gradient(90deg, #000 82%, transparent);
  mask-image: linear-gradient(90deg, #000 82%, transparent);
}
.close { margin-left: 22px; }
.sep { position: absolute; right: -2px; top: 23px; width: 3.300px; height: 32px; border-radius: 2px; background: #c4c0fb; }
.tab.quiet .sep { display: none; }
.tab.active {
  width: 356px;
  margin: 10px 6px 0 4px;
  padding: 0 0 12px 18px;
  background: #fbf9ff;
  border-radius: 20px 20px 0 0;
  color: #201d2c;
}
.tab.active::before, .tab.active::after { content: ""; position: absolute; bottom: 0; width: 20px; height: 20px; }
.tab.active::before { left: -20px; background: radial-gradient(circle at 0 0, transparent 19.500px, #fbf9ff 20px); }
.tab.active::after { right: -20px; background: radial-gradient(circle at 100% 0, transparent 19.500px, #fbf9ff 20px); }
.tab.active .close { margin-left: 18px; }
.tab.last { width: 368px; }
.plus { margin-left: 23px; }
.chevron {
  width: 56px;
  height: 56px;
  margin: 0 12px 0 auto;
  border-radius: 20px;
  background: #f0edfc;
  display: flex;
  align-items: center;
  justify-content: center;
}

.toolbar {
  height: 92px;
  background: #fbf9ff;
  border-radius: 20px 20px 0 0;
  display: flex;
  align-items: center;
}
.history { width: 240px; padding-left: 31px; display: flex; gap: 46px; }
.omnibox {
  width: 3676px;
  height: 68px;
  border-radius: 34px;
  background: #ebe8f2;
  padding: 0 31px 0 9px;
  display: flex;
  align-items: center;
}
.site { width: 50px; height: 50px; border-radius: 50%; background: #fbf9ff; display: flex; align-items: center; justify-content: center; }
.url { margin-left: 14px; padding-top: 1px; font-size: 26.500px; color: #201d2c; }
.fav { margin-left: auto; }
.extensions { padding-left: 36px; display: flex; align-items: center; gap: 38px; }
.ext-s { position: relative; }
.count {
  position: absolute;
  left: 16px;
  top: 16px;
  width: 28px;
  height: 28px;
  border-radius: 7px;
  background: #edebf1;
  color: #201d2c;
  font-size: 19px;
  font-weight: 500;
  line-height: 28px;
  text-align: center;
}
.rule { width: 3.300px; height: 32px; background: #dedbfa; flex: none; }
.extensions .rule { margin: 0 -2px 0 -3px; }
.extensions > svg:nth-last-child(1) { margin-left: 10px; }
.extensions > svg:nth-last-child(2) { margin-left: -3px; }

.bookmarks {
  height: 70px;
  padding: 0 30px 12px 38px;
  background: #fbf9ff;
  border-bottom: 2.200px solid #e3e1ec;
  display: flex;
  align-items: center;
  font-size: 23px;
  color: #46434f;
}
.bookmarks .grid { margin-right: 30px; }
.marks { margin-left: 28px; display: flex; }
.mark { display: flex; align-items: center; gap: 12px; }
.edx { width: 32px; height: 24px; display: flex; font-size: 13px; line-height: 15px; color: #fff; }
.edx b { background: #12262c; height: 17px; padding-left: 2px; }
.edx b + b { margin-top: 4px; height: 19px; padding: 0 3px; }
.more { margin: 0 31px 0 auto; }
.bookmarks > .rule + svg { margin-left: 32px; }
.all { margin-left: 15px; }

.page { flex: 1; background: #fff; overflow: hidden; font-feature-settings: "cv11"; }
.site-header {
  position: relative;
  height: 160px;
  padding: 0 736px;
  background: #fff;
  box-shadow: 0 8px 12px -2px rgba(0, 0, 0, .1), 0 4px 8px -2px rgba(0, 0, 0, .1);
  display: flex;
  align-items: center;
  justify-content: space-between;
}
.brand { display: flex; align-items: center; gap: 24px; }
.brand-text { display: flex; flex-direction: column; align-items: flex-start; }
.name { font-size: 47.500px; line-height: 64px; font-weight: 700; color: #802ba6; }
.tag { font-size: 24px; line-height: 32px; color: #ea953d; }
.links { display: flex; align-items: center; gap: 48px; font-size: 35.500px; color: #394454; }
.current { color: #802ba6; font-weight: 600; }
.cta {
  width: 448px;
  height: 88px;
  border: 0;
  padding: 0;
  border-radius: 12px;
  background: linear-gradient(90deg, #802ba6, #f19c38);
  color: #fff;
  font: 500 27.500px Inter, "Liberation Sans", sans-serif;
  font-feature-settings: inherit;
}
.cta.small { width: 302px; height: 80px; }
.tarot { height: 276px; padding-top: 28px; background: #f0e5f3; display: flex; justify-content: center; align-items: flex-start; }
.clients { height: 972px; padding: 160px 736px 0; }
.insights { height: 620px; padding: 160px 736px 0; background: #f0e5f3; }
h2 { margin: 0 0 96px; text-align: center; font-size: 71px; line-height: 80px; font-weight: 700; color: #451789; }
.cards { display: grid; grid-template-columns: repeat(3, 1fr); gap: 64px; }
.card { border: 2.200px solid #f7ce8b; border-radius: 16px; box-shadow: 0 2px 4px rgba(0, 0, 0, .05); font-size: 31.800px; line-height: 48px; color: #000; }
.quote { height: 476px; padding: 48px; background: #fdf4e7; }
.who { display: flex; align-items: center; gap: 32px; margin-bottom: 32px; }
.avatar { position: relative; width: 120px; height: 120px; border-radius: 60px; overflow: hidden; line-height: 48px; }
.avatar > svg { float: left; }
.alt-line { display: block; }
.avatar .alt-line:last-child { clear: left; }
.avatar.tall { height: 128px; }
.avatar.tall > svg { float: none; }
.pname { font-weight: 600; color: #5d1f98; }
.city { font-size: 28px; line-height: 40px; color: #812ba5; }
p { margin: 0 0 32px; color: #70259e; }
.line { display: block; height: 48px; }
.stars { display: flex; }
.stars svg { fill: #e2b53f; color: #e2b53f; }
.stars svg.off { fill: none; color: #d4d7dc; }
.post { height: 440px; background: #fff; display: flex; align-items: flex-start; }

.desk {
  position: relative;
  height: 218px;
  display: flex;
  flex-direction: column;
  align-items: center;
  background:
    radial-gradient(circle 16px at 4385px 80px, #c9c6ff 0, #2a22a0 30%, transparent),
    radial-gradient(circle 16px at 2052px 216px, #a79ad0 0, #33206e 40%, transparent),
    radial-gradient(circle 8px at 1577px 212px, #9d83d8, transparent),
    radial-gradient(circle 8px at 1788px 216px, #a99ae6, transparent),
    radial-gradient(circle 8px at 2655px 212px, #b8a6e4, transparent),
    radial-gradient(circle 8px at 2714px 214px, #b39ce6, transparent),
    radial-gradient(circle 20px at 3382px 216px, #3b31b0, transparent),
    radial-gradient(circle 6px at 820px 216px, #b6b0e0, transparent),
    radial-gradient(circle 6px at 1320px 210px, #8e76a8, transparent),
    linear-gradient(90deg, #000, #05041c 8%, #07051a 20%, #05020d 50%, #0a0418 70%, #020103 88%, #000);
}
.ledge { width: 4472px; height: 12px; flex: none; border-radius: 0 0 20px 20px; background: linear-gradient(#000 3px, #363535 3px, #2b2b2a 8px, #000 8px); }
.dock {
  width: 4167px;
  height: 196px;
  border: 2.200px solid #3b3941;
  border-radius: 64px;
  background:
    radial-gradient(ellipse 500px 120px at 10% 100%, rgba(24, 20, 66, .6), transparent),
    linear-gradient(90deg, #141319, #17131e 20%, #1c1420 40%, #1b1223 58%, #18131f 68%, #131217 80%, #121215);
  box-shadow: 0 0 80px rgba(0, 0, 0, .24);
  padding: 24px 0 0 24px;
  display: flex;
  gap: 40px;
}
.app { position: relative; width: 134px; height: 134px; flex: none; }
.app > svg { width: 134px; height: 134px; font-family: Inter, sans-serif; }
.app.on::after { content: ""; position: absolute; left: 62px; top: 158px; width: 8px; height: 8px; border-radius: 50%; background: #a3a0aa; }
.petals-big rect { mix-blend-mode: multiply; }
.split { width: 2px; height: 144px; margin: 0 18px; background: #46454a; flex: none; }
.badge {
  position: absolute;
  left: 89px;
  top: -17px;
  width: 64px;
  height: 64px;
  border-radius: 50%;
  background: #df4b3e;
  color: #fff;
  font-size: 35px;
  line-height: 64px;
  text-align: center;
}
</style>
